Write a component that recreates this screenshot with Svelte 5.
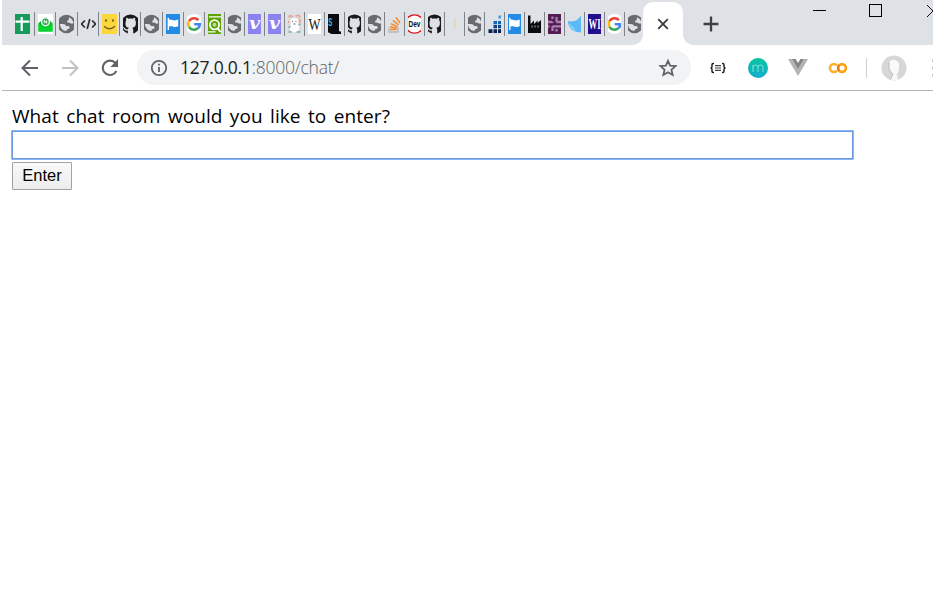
<script>
  // Each tab: icon name, icon width and full width including its right separator.
  const tabs = [
    ['sheet', 15, 21], ['mail', 15, 21], ['globe', 15, 22], ['code', 15, 21],
    ['smile', 15, 21], ['github', 15, 21], ['globe', 15, 22], ['flag', 14, 21],
    ['google', 14, 21], ['search', 13, 20], ['globe', 13, 20], ['v', 13, 20],
    ['v', 13, 20], ['bear', 13, 20], ['wiki', 13, 20], ['shell', 13, 20],
    ['github', 13, 20], ['globe', 13, 20], ['stack', 13, 20], ['dev', 13, 20],
    ['github', 13, 20], ['line', 13, 20], ['globe', 13, 20], ['blocks', 13, 20],
    ['flag', 13, 20], ['factory', 13, 20], ['slack', 13, 20], ['leaf', 13, 20],
    ['wi', 13, 20], ['google', 13, 20], ['globe', 13, 18]
  ];
</script>

{#snippet icon(name)}
  {#if name === 'sheet'}
    <rect width="20" height="20" fill="#159c5a" />
    <path d="M3 7.7H17M9.2 3V17" stroke="#fff" stroke-width="2.2" />
  {:else if name === 'mail'}
    <rect width="20" height="20" fill="#fff" />
    <path d="M3 9L10 3L17 9V17.5H3Z" fill="#0bb62e" />
    <circle cx="10" cy="7.8" r="4.6" fill="#fff" /><circle cx="10" cy="7.8" r="3.2" fill="#22a447" />
    <path d="M8.8 9.3V6.3L11.2 9.3V6.3" stroke="#fff" fill="none" />
    <path d="M3 9.5L10 13.5L17 9.5V17.5H3Z" fill="#04d52d" />
  {:else if name === 'globe'}
    <circle cx="10" cy="10" r="9.2" fill="#686c70" />
    <path d="M12.6 3.2Q16 4.6 17 9Q15.5 10.3 14 9.3Q13 8.2 11 8.6Q10 7.6 11.2 6.6Q12.6 6 12.6 3.2Z" fill="#dee1e6" />
    <path d="M3.2 10H6.5Q9 10 9.6 12H12.2Q13.8 13 12.8 14.6L10.8 15.2L9.6 17Q4.5 16.5 3.2 10Z" fill="#dee1e6" />
  {:else if name === 'code'}
    <path d="M6.4 6.5L3 10L6.4 13.5M13.6 6.5L17 10L13.6 13.5M11.3 5L8.7 15" stroke="#292b2d" stroke-width="1.7" fill="none" />
  {:else if name === 'smile'}
    <rect width="20" height="20" fill="#fdd63c" />
    <path d="M5.5 6.5H7.5M12.5 6.5H14.5" stroke="#6d5b24" stroke-width="1.8" />
    <path d="M4.5 12.2Q10 17.3 15.5 12.2" stroke="#755d1c" stroke-width="1.3" fill="none" />
  {:else if name === 'github'}
    <path d="M7.3 19.5V16.5C5 17 4 16 3.3 14.7C2.8 13.8 2 13.5 1.8 13C3.5 12.7 4.3 14 5 14.8C5.8 15.6 6.8 15.4 7.6 15C7.7 14.5 8 14 8.3 13.8C5.5 13.4 5 12 5 9C5 7.8 5.3 6.8 5.8 6.1C5.5 5.2 5.5 4.4 5.8 3.8C6.8 3.9 7.4 4.2 8 4.7C9.4 4.3 10.7 4.3 12.1 4.7C13 4.2 13.6 3.9 14.4 3.8C14.7 4.4 14.8 5.2 14.5 6.1C15.2 6.9 15.4 7.8 15.4 9C15.4 12 14.5 13.4 11.8 13.8C12.4 14.3 12.7 15 12.7 16V19.5C17 18 19.5 14.5 19.5 10A9.5 9.5 0 1 0 .5 10C.5 14.5 3.3 18.2 7.3 19.5Z" fill="#18191b" />
  {:else if name === 'flag'}
    <rect width="20" height="20" fill="#238be6" />
    <path d="M4.6 3.8H6V5.8C8.5 4.5 10 7.8 15.2 5.6V12.2C10.5 14.2 9 11 6 12.6V16H4.6Z" fill="#fff" />
  {:else if name === 'google'}
    <circle cx="10" cy="10" r="10" fill="#fff" />
    <path d="M14.4 6.2A5.8 5.8 0 0 0 5 7.2" stroke="#ea4335" stroke-width="2.5" fill="none" />
    <path d="M5 7.2A5.8 5.8 0 0 0 5 12.8" stroke="#fbbc05" stroke-width="2.5" fill="none" />
    <path d="M5 12.8A5.8 5.8 0 0 0 13.8 14.3" stroke="#34a853" stroke-width="2.5" fill="none" />
    <path d="M10.2 10.3H15.8C15.8 12 15.1 13.4 13.8 14.3" stroke="#4285f4" stroke-width="2.5" fill="none" />
  {:else if name === 'search'}
    <rect width="20" height="20" fill="#5ba204" />
    <path d="M4.5 2.8H17M3.6 17.8H11" stroke="#fff" stroke-width="1.2" />
    <circle cx="10" cy="10.8" r="4.6" fill="none" stroke="#fff" stroke-width="1.8" />
    <circle cx="10" cy="10.8" r="2" fill="#b9dc8c" /><path d="M13 14L16 18" stroke="#fff" stroke-width="2" />
  {:else if name === 'v'}
    <rect width="20" height="20" fill="#8c82f2" />
    <text x="10" y="14.5" text-anchor="middle" font-family="DejaVu Serif, serif" font-size="16" font-weight="bold" font-style="italic" textLength="11" lengthAdjust="spacingAndGlyphs" fill="#fff">v</text>
  {:else if name === 'bear'}
    <rect x="3" y="1" width="14" height="18" fill="#dcdad6" />
    <path d="M4 3L6 1.5L8 3M11 2L14 1.5L16 3M4 7V9M15.5 5V9" stroke="#f0a097" stroke-width="1.7" fill="none" />
    <ellipse cx="10" cy="13.5" rx="4.9" ry="4.8" fill="#fff" /><circle cx="9.8" cy="8" r="4" fill="#fff" />
    <path d="M8 7V8M11.5 7V8M9 10H11" stroke="#626871" /><path d="M4 14L6 12M14 11L16 10M4 18H7M12 18H16" stroke="#78b2bc" stroke-width="1.6" />
  {:else if name === 'wiki'}
    <rect width="20" height="20" fill="#fff" />
    <text x="10" y="15.5" text-anchor="middle" font-family="Liberation Serif, serif" font-size="16" textLength="12" lengthAdjust="spacingAndGlyphs" fill="#111">W</text>
  {:else if name === 'shell'}
    <path d="M3 0H14.5V17L17 18V20H7L3 18Z" fill="#080a0d" />
    <text x="3.7" y="12" font-family="Liberation Sans, sans-serif" font-size="10" font-weight="bold" textLength="4" lengthAdjust="spacingAndGlyphs" fill="#45b9dd">S</text>
  {:else if name === 'stack'}
    <path d="M3.5 13V18H13.5V13" fill="none" stroke="#b7b7b8" stroke-width="1.3" />
    <path d="M5 15.6H12M5.2 12.8L12.2 14.2M6.4 9.7L13 12.7M8.4 6.3L14 10.8M11.4 3.2L15.5 9" stroke="#f58a35" stroke-width="1.5" />
  {:else if name === 'dev'}
    <circle cx="10" cy="10" r="9.2" fill="#fff" stroke="#d71920" stroke-width="1.3" />
    <text x="10" y="13" text-anchor="middle" font-family="Liberation Sans, sans-serif" font-size="8.5" font-weight="bold" textLength="12" lengthAdjust="spacingAndGlyphs" fill="#111">Dev</text>
  {:else if name === 'line'}
    <path d="M10.5 4V15" stroke="#f0cf8e" />
  {:else if name === 'blocks'}
    <path d="M14 1.5H16.5V4.5H14Z" fill="#3e9bdc" /><path d="M9 7H12.5V10.3H9ZM13.5 7H16.5V10.3H13.5Z" fill="#1266b4" />
    <path d="M9 11H12.5V14.3H9ZM13.5 11H16.5V14.3H13.5Z" fill="#0a4387" /><path d="M4 15.3H8V19H4ZM9 15.3H12.5V19H9ZM13.5 15.3H16.5V19H13.5Z" fill="#08224e" />
  {:else if name === 'factory'}
    <path d="M3.5 19V1.5H6V10L9.5 6.5V10L13 6.5V9L16.5 6V19Z" fill="#0b0c0d" />
    <path d="M7.5 11.5V13.5M10.5 11.5V13.5M13.5 11.5V13.5" stroke="#aaa" stroke-width="1" />
  {:else if name === 'slack'}
    <rect width="20" height="20" fill="#541b54" />
    <path d="M8 2.5V5M12 3V8M8 12V17M12 15V17.5M3 8H8M12 8H17M3 12.3H5M8 12.3H17M8 8V9M12 12V13" stroke="#a781a7" stroke-width="2.3" />
  {:else if name === 'leaf'}
    <path d="M3.5 7Q12 9 16.5 1.5V18.5Q4 18 3.5 7Z" fill="#5bb9f7" /><path d="M4 9L9 13L12 18Q5 16 4 9Z" fill="#81cdfb" />
  {:else if name === 'wi'}
    <rect width="20" height="20" fill="#210d8e" />
    <text x="10" y="15" text-anchor="middle" font-family="Liberation Serif, serif" font-size="14" font-weight="bold" textLength="12" lengthAdjust="spacingAndGlyphs" fill="#fff">WI</text>
  {/if}
{/snippet}

<div class="browser">
  <header class="strip">
    <div class="tabs">
      {#each tabs as [name, iconWidth, width], i}
        <div class="tab" class:last={i === tabs.length - 1} style:width="{width}px">
          <svg width={iconWidth} height="20" viewBox="{(20 - iconWidth) / 2} 0 {iconWidth} 20">{@render icon(name)}</svg>
        </div>
      {/each}
    </div>
    <div class="active">
      <svg width="12" height="12" viewBox="0 0 12 12"><path d="M1.2 1.2L10.8 10.8M10.8 1.2L1.2 10.8" stroke="#3c4043" stroke-width="1.9" /></svg>
    </div>
    <svg class="new" width="16" height="16" viewBox="0 0 16 16"><path d="M.5 8H15.5M8 .5V15.5" stroke="#3c4043" stroke-width="2.3" /></svg>
    <div class="window">
      <svg width="120" height="20" viewBox="0 0 120 20" shape-rendering="crispEdges">
        <path d="M0 10.5H13" stroke="#000" /><rect x="56.5" y="4.5" width="12" height="12" fill="none" stroke="#000" />
        <path d="M114 5L126 17M126 5L114 17" stroke="#111" shape-rendering="auto" />
      </svg>
    </div>
  </header>
  <nav class="toolbar">
    <svg class="back" width="18" height="18" viewBox="0 0 18 18"><path d="M17 9H2M9 1.5L1.5 9L9 16.5" fill="none" stroke="#5f6368" stroke-width="2" /></svg>
    <svg class="forward" width="18" height="18" viewBox="0 0 18 18"><path d="M1 9H16M9 1.5L16.5 9L9 16.5" fill="none" stroke="#bfc1c3" stroke-width="2" /></svg>
    <svg class="reload" width="18" height="18" viewBox="0 0 18 18"><path d="M15.4 12A7.2 7.2 0 1 1 14.5 4.2" fill="none" stroke="#5f6368" stroke-width="2.1" /><path d="M17 0V8H9.4Z" fill="#5f6368" /></svg>
    <div class="address">
      <svg width="18" height="18" viewBox="0 0 18 18"><circle cx="9" cy="9" r="7.2" fill="none" stroke="#5f6368" stroke-width="1.8" /><path d="M9 8V13M9 4.8V6.6" stroke="#5f6368" stroke-width="1.8" /></svg>
      <span class="url"><b>127.0.0.1</b>:8000/chat/</span>
      <svg class="star" width="20" height="20" viewBox="0 0 20 20"><path d="M10 2.8L12.1 7.7L17.5 8.1L13.4 11.7L14.7 17L10 14.2L5.3 17L6.6 11.7L2.5 8.1L7.9 7.7Z" fill="none" stroke="#5f6368" stroke-width="1.8" /></svg>
    </div>
    <div class="extensions">
      <svg width="18" height="20" viewBox="0 0 18 20"><path d="M5 5.5H4Q3 5.5 3 7V8.5Q3 10 1.5 10Q3 10 3 11.5V13Q3 14.5 4 14.5H5M13 5.5H14Q15 5.5 15 7V8.5Q15 10 16.5 10Q15 10 15 11.5V13Q15 14.5 14 14.5H13" fill="none" stroke="#222" stroke-width="1.5" /><path d="M6 7.7H12M6 10H12M6 12.3H12" stroke="#444" stroke-width="1.2" /></svg>
      <svg width="20" height="20" viewBox="0 0 20 20"><defs><linearGradient id="teal" x1="0" y1="0" x2="0" y2="1"><stop stop-color="#06c5a0" /><stop offset="1" stop-color="#13adcb" /></linearGradient></defs><circle cx="10" cy="10" r="10" fill="url(#teal)" /><path d="M5 14V7M5 9Q5 7 7.5 7T10 9V14M10 9Q10 7 12.5 7T15 9V14" fill="none" stroke="#82e0d6" stroke-width="1" /></svg>
      <svg width="20" height="20" viewBox="0 0 20 20"><path d="M0 1H4L10 11.3L16 1H20L10 18Z" fill="#b3b3b3" /><path d="M4 1H7.7L10 5L12.3 1H16L10 11.3Z" fill="#858585" /></svg>
      <svg width="20" height="20" viewBox="0 0 20 20"><path d="M8.8 7.2A4 4 0 1 0 8.8 12.8" fill="none" stroke="#fbb12a" stroke-width="2.7" /><circle cx="14" cy="10" r="3.9" fill="none" stroke="#f9a117" stroke-width="2.7" /><path d="M11.2 7.2A4 4 0 0 0 11.2 12.8" fill="none" stroke="#e87911" stroke-width="2.2" /></svg>
    </div>
    <i class="divider"></i>
    <svg class="avatar" width="26" height="26" viewBox="0 0 26 26"><circle cx="13" cy="13" r="12.5" fill="#d7d7d7" /><path d="M8 9Q9 4 14 5Q19 6 18 13Q18 17 16 19L17 25Q13 26 10 24L12 19Q7 16 8 9Z" fill="#f8f9fa" /><path d="M8 8Q7 16 12 19L10 23" fill="none" stroke="#bdbdbd" /></svg>
    <svg class="more" width="1" height="18" viewBox="0 0 1 18"><path d="M0 2H1M0 9H1M0 16H1" stroke="#c4c6c8" stroke-width="3" /></svg>
  </nav>
  <main>
    <label for="room">What chat room would you like to enter?</label>
    <input id="room" type="text" />
    <button type="button">Enter</button>
  </main>
</div>

<style>
  :global(body) { background: #fff; }
  .browser { box-sizing: border-box; height: 600px; padding: 0 2px; overflow: hidden; background: #fff; }
  svg { display: block; flex: none; }
  .strip { display: flex; height: 45px; background: #dee1e6; overflow: hidden; }
  .tabs { display: flex; box-sizing: border-box; padding: 12px 0 0 12px; width: 641px; flex: none; }
  .tab { box-sizing: border-box; flex: none; height: 24px; padding: 2px 0 0 3px; border-right: 1px solid #7f8287; }
  .tab:first-child { padding-left: 1px; }
  .tab.last { border: 0; }
  .active { position: relative; box-sizing: border-box; flex: none; width: 40px; height: 43px; margin-top: 2px; padding: 16px 0 0 14px; border-radius: 10px 10px 0 0; background: #fff; }
  .active::before, .active::after { content: ''; position: absolute; bottom: 0; width: 10px; height: 10px; }
  .active::before { left: -10px; background: radial-gradient(circle at 0 0, transparent 9.5px, #fff 10px); }
  .active::after { right: -10px; background: radial-gradient(circle at 100% 0, transparent 9.5px, #fff 10px); }
  .new { margin: 16px 0 0 20px; }
  .window { margin-left: 94px; }
  .toolbar { display: flex; align-items: center; box-sizing: border-box; height: 46px; padding-left: 19px; border-bottom: 1px solid #b5b6b7; }
  .forward, .reload { margin-left: 22px; }
  .address { display: flex; align-items: center; box-sizing: border-box; flex: none; width: 554px; height: 35px; margin-left: 18px; padding: 0 13px; border-radius: 18px; background: #f1f3f4; }
  .url { margin-left: 12px; white-space: nowrap; color: #606366; font: 350 17.5px/24px 'Open Sans', sans-serif; letter-spacing: -.23px; transform: translateY(-1px); }
  .url b { color: #202124; font-weight: 400; }
  .star { margin-left: auto; }
  .extensions { display: flex; gap: 20px; margin-left: 18px; }
  .extensions svg:nth-child(2) { margin-left: 1px; }
  .divider { width: 1px; height: 20px; margin-left: 18px; background: #cdcfd1; }
  .avatar { margin-left: 14px; }
  .more { margin-left: auto; }
  main { display: flex; flex-direction: column; align-items: flex-start; padding: 11px 9px; }
  label { height: 28px; margin-left: 1px; line-height: 28px; white-space: nowrap; color: #000; font-family: 'Open Sans', 'Noto Sans', sans-serif; font-size: 19px; font-weight: 370; letter-spacing: .07px; word-spacing: 2.4px; }
  input { box-sizing: border-box; width: 843px; height: 30px; padding: 2px 4px; border: 1px solid #8bb5f6; border-radius: 1px; outline: 0; box-shadow: inset 0 0 0 1px #6c9ae0; background: #fff; font: 17px 'Liberation Sans', sans-serif; }
  button { box-sizing: border-box; width: 60px; height: 28px; margin: 2px 0 0 1px; padding: 0 0 2px; border: 1px solid #a3a3a3; border-radius: 1px; background: linear-gradient(#fafafa, #ececec); color: #000; font: 16.5px/24px 'Liberation Sans', sans-serif; }
</style>
